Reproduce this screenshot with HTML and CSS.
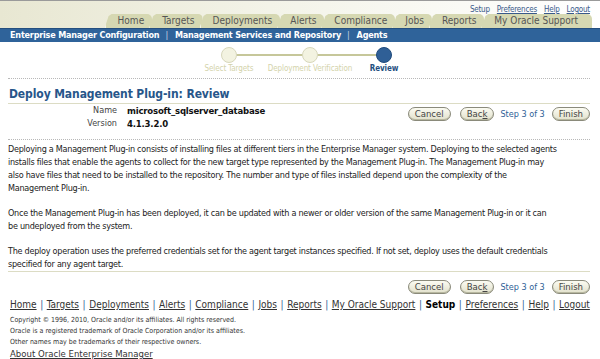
FILE: index.html
```html
<!DOCTYPE html>
<html>
<head>
<meta charset="utf-8">
<link rel="stylesheet" href="styles.css">
</head>
<body>
<div class="header">
  <div class="global">
    <a href="#">Setup</a><a href="#">Preferences</a><a href="#">Help</a><a href="#">Logout</a>
  </div>
  <div class="tabs">
    <span class="tab">Home</span>
    <span class="tab">Targets</span>
    <span class="tab">Deployments</span>
    <span class="tab">Alerts</span>
    <span class="tab">Compliance</span>
    <span class="tab">Jobs</span>
    <span class="tab">Reports</span>
    <span class="tab">My Oracle Support</span>
  </div>
</div>
<div class="bluebar">
  <span>Enterprise Manager Configuration</span><span class="sep">|</span><span>Management Services and Repository</span><span class="sep">|</span><span>Agents</span>
</div>
<div class="content">
  <div class="train">
    <div class="stop s1">
      <div class="track"><span class="circle"></span></div>
      <div class="lbl">Select Targets</div>
    </div>
    <div class="stop s2">
      <div class="track"><span class="circle"></span></div>
      <div class="lbl">Deployment Verification</div>
    </div>
    <div class="stop s3 active">
      <div class="track"><span class="circle"></span></div>
      <div class="lbl">Review</div>
    </div>
  </div>
  <div class="dots"></div>
  <h1 class="title">Deploy Management Plug-in: Review</h1>
  <div class="infoRow">
    <div class="info">
      <div class="k">Name</div><div class="v">microsoft_sqlserver_database</div>
      <div class="k">Version</div><div class="v">4.1.3.2.0</div>
    </div>
    <div class="actions">
      <button class="btn">Cancel</button>
      <button class="btn back">Bac<u>k</u></button>
      <span class="step">Step 3 of 3</span>
      <button class="btn">Finish</button>
    </div>
  </div>
  <div class="dots"></div>
  <div class="text">
    <p>Deploying a Management Plug-in consists of installing files at different tiers in the Enterprise Manager system. Deploying to the selected agents<br>installs files that enable the agents to collect for the new target type represented by the Management Plug-in. The Management Plug-in may<br>also have files that need to be installed to the repository. The number and type of files installed depend upon the complexity of the<br>Management Plug-in.</p>
    <p>Once the Management Plug-in has been deployed, it can be updated with a newer or older version of the same Management Plug-in or it can<br>be undeployed from the system.</p>
    <p>The deploy operation uses the preferred credentials set for the agent target instances specified. If not set, deploy uses the default credentials<br>specified for any agent target.</p>
  </div>
  <div class="bottomBar">
    <div class="actions">
      <button class="btn">Cancel</button>
      <button class="btn back">Bac<u>k</u></button>
      <span class="step">Step 3 of 3</span>
      <button class="btn">Finish</button>
    </div>
  </div>
  <div class="footerLinks">
    <a href="#">Home</a><span class="sep">|</span><a href="#">Targets</a><span class="sep">|</span><a href="#">Deployments</a><span class="sep">|</span><a href="#">Alerts</a><span class="sep">|</span><a href="#">Compliance</a><span class="sep">|</span><a href="#">Jobs</a><span class="sep">|</span><a href="#">Reports</a><span class="sep">|</span><a href="#">My Oracle Support</a><span class="sep">|</span><b>Setup</b><span class="sep">|</span><a href="#">Preferences</a><span class="sep">|</span><a href="#">Help</a><span class="sep">|</span><a href="#">Logout</a>
  </div>
  <div class="copy">
    <div>Copyright © 1996, 2010, Oracle and/or its affiliates. All rights reserved.</div>
    <div>Oracle is a registered trademark of Oracle Corporation and/or its affiliates.</div>
    <div>Other names may be trademarks of their respective owners.</div>
    <a class="about" href="#">About Oracle Enterprise Manager</a>
  </div>
</div>
</body>
</html>
```
FILE: styles.css
```css
* { box-sizing: border-box; }
html, body { margin: 0; padding: 0; background: #fff; }
body {
  font-family: "DejaVu Sans Condensed", "DejaVu Sans", sans-serif;
  font-size: 10px;
  color: #222;
  overflow: hidden;
}
a { color: inherit; }

.header {
  height: 28px;
  border-top: 1px solid #9a9a9a;
  background: linear-gradient(to right, #e8e7d2 0%, #f3f3e8 45%, #ffffff 100%);
  display: flex;
  flex-direction: column;
  align-items: flex-end;
  padding-right: 8px;
}
.global {
  display: flex;
  gap: 7px;
  font-size: 8px;
  letter-spacing: -0.2px;
  height: 13px;
  padding-top: 4px;
  padding-right: 2px;
}
.global a { color: #3a5a8a; }
.global a:first-child { text-decoration: none; }
.tabs {
  display: flex;
  align-items: flex-end;
  height: 14px;
}
.tab {
  height: 14px;
  line-height: 14px;
  padding: 0 8px 0 12px;
  margin-left: -3px;
  font-size: 10px;
  color: #555;
  background: #d6d8b2;
  border-top-right-radius: 5px;
  clip-path: polygon(0 100%, 4px 2px, 7px 0, 100% 0, 100% 100%);
  border-left: 1px solid #f5f5e8;
}
.tab:first-child { margin-left: 0; }
.tab:last-child { padding-right: 14px; }

.bluebar {
  height: 14px;
  background: #2f639a;
  border-top: 1px solid #254f7f;
  color: #fff;
  font-weight: bold;
  font-size: 9px;
  letter-spacing: -0.2px;
  line-height: 13px;
  padding-left: 10px;
  white-space: nowrap;
}
.bluebar .sep { font-weight: normal; margin: 0 7px 0 6px; color: #c9d6e6; }

.content { padding: 0 10px 0 8px; }

.train {
  display: flex;
  padding-left: 181px;
  padding-top: 5px;
  height: 36px;
}
.stop { display: flex; flex-direction: column; align-items: center; }
.s1 { width: 80px; }
.s2 { width: 82px; }
.s3 { width: 66px; }
.track { position: relative; height: 16px; width: 100%; display: flex; justify-content: center; align-items: center; }
.track::before {
  content: "";
  position: absolute;
  left: 0; right: 0; top: 7px;
  height: 2px;
  background: #c6c79a;
}
.s1 .track::before { left: 50%; }
.s3 .track::before { right: 50%; }
.circle {
  position: relative;
  width: 16px; height: 16px;
  border-radius: 50%;
  background: #f3f3e1;
  border: 1px solid #d7d7bb;
}
.active .circle { background: #2f5f96; border-color: #1f4a7c; }
.lbl { font-size: 8px; letter-spacing: -0.1px; line-height: 10px; color: #d3d3ab; white-space: nowrap; margin-top: 1px; }
.active .lbl { color: #24507f; font-weight: bold; }

.dots { border-top: 1px dotted #b8b8b8; height: 0; }

.title {
  margin: 7px 0 0 0;
  padding-left: 1px;
  font-size: 12px;
  letter-spacing: -0.1px;
  font-weight: bold;
  color: #27568a;
  padding-bottom: 1px;
  border-bottom: 1px solid #dcdcc4;
  line-height: 16px;
}

.infoRow {
  display: flex;
  justify-content: space-between;
  align-items: flex-start;
  height: 35px;
}
.info {
  display: grid;
  grid-template-columns: 109px auto;
  column-gap: 10px;
  line-height: 13px;
  font-size: 9.5px;
  letter-spacing: -0.2px;
}
.info .k { text-align: right; color: #444; font-size: 9px; letter-spacing: 0; }
.info .v { font-weight: bold; color: #111; }

.actions { display: flex; align-items: center; margin-top: 3px; }
.btn {
  font-family: inherit;
  font-size: 9.5px;
  color: #444;
  height: 14px;
  line-height: 12px;
  padding: 0 6px;
  border: 1px solid #8a8a7a;
  border-radius: 7px;
  background: linear-gradient(#fbfbf2, #e2e1cc);
  box-shadow: inset 0 -1px 0 #b8b8a0;
}
.btn.back { margin-left: 9px; }
.step { color: #2f5f96; font-size: 9px; margin: 0 7px 0 6px; }

.text { padding-top: 3px; }
.text p { margin: 0 0 12px 0; line-height: 13px; font-size: 9px; letter-spacing: -0.26px; color: #222; white-space: nowrap; }
.text p:last-child { margin-bottom: 0; }

.bottomBar {
  border-top: 1px solid #dcdcc4;
  display: flex;
  justify-content: flex-end;
  padding-top: 1px;
  height: 27px;
}

.footerLinks {
  font-size: 10px;
  line-height: 13px;
  color: #333;
  white-space: nowrap;
  display: flex;
  justify-content: space-between;
  padding-left: 2px;
}
.footerLinks a { color: #333; }
.footerLinks b { color: #000; }
.footerLinks .sep { color: #2f5f96; }

.copy { margin-top: 4px; font-size: 7px; line-height: 11px; color: #333; padding-left: 2px; }
.copy .about { font-size: 9.5px; color: #333; display: inline-block; line-height: 11px; }
```
